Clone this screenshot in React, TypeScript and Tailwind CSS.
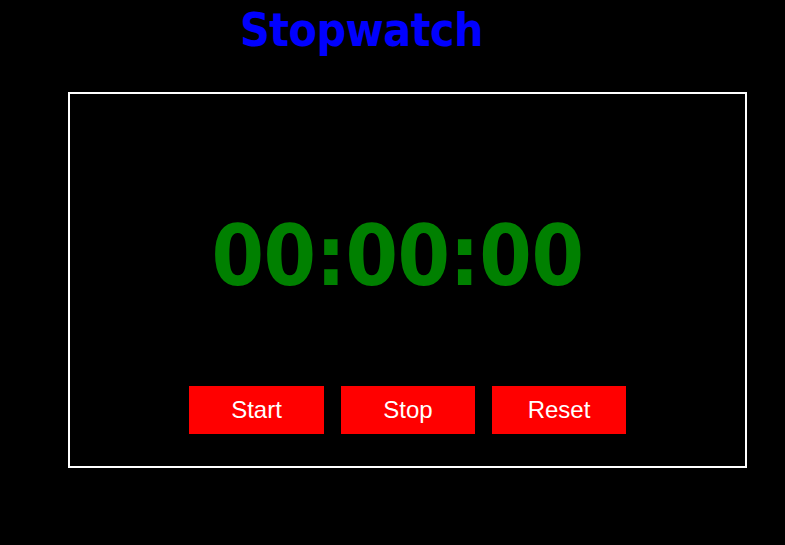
export default function App() {
  return (
    <div className="w-[785px] h-[545px] bg-black overflow-hidden">
      <div className="h-[92px] flex justify-center pr-[62px]">
        <h1 className="text-[#0000ff] text-[46px] leading-[60px] font-bold tracking-[-0.5px]" style={{ fontFamily: '"DejaVu Sans Condensed", "DejaVu Sans", sans-serif' }}>
          Stopwatch
        </h1>
      </div>
      <div className="ml-[68px] w-[679px] h-[376px] border-2 border-white flex flex-col items-center">
        <div className="mt-[112px] h-[100px] flex items-center pr-[20px] text-[#008000] text-[84px] tracking-[-0.5px] font-bold leading-none" style={{ fontFamily: '"DejaVu Sans Condensed", "DejaVu Sans", sans-serif' }}>
          00:00:00
        </div>
        <div className="mt-[80px] flex gap-[17px]" style={{ fontFamily: '"Liberation Sans", Arial, sans-serif' }}>
          <button className="w-[135px] h-[48px] bg-[#ff0000] text-white text-[24px]">Start</button>
          <button className="w-[134px] h-[48px] bg-[#ff0000] text-white text-[24px]">Stop</button>
          <button className="w-[134px] h-[48px] bg-[#ff0000] text-white text-[24px]">Reset</button>
        </div>
      </div>
    </div>
  );
}
